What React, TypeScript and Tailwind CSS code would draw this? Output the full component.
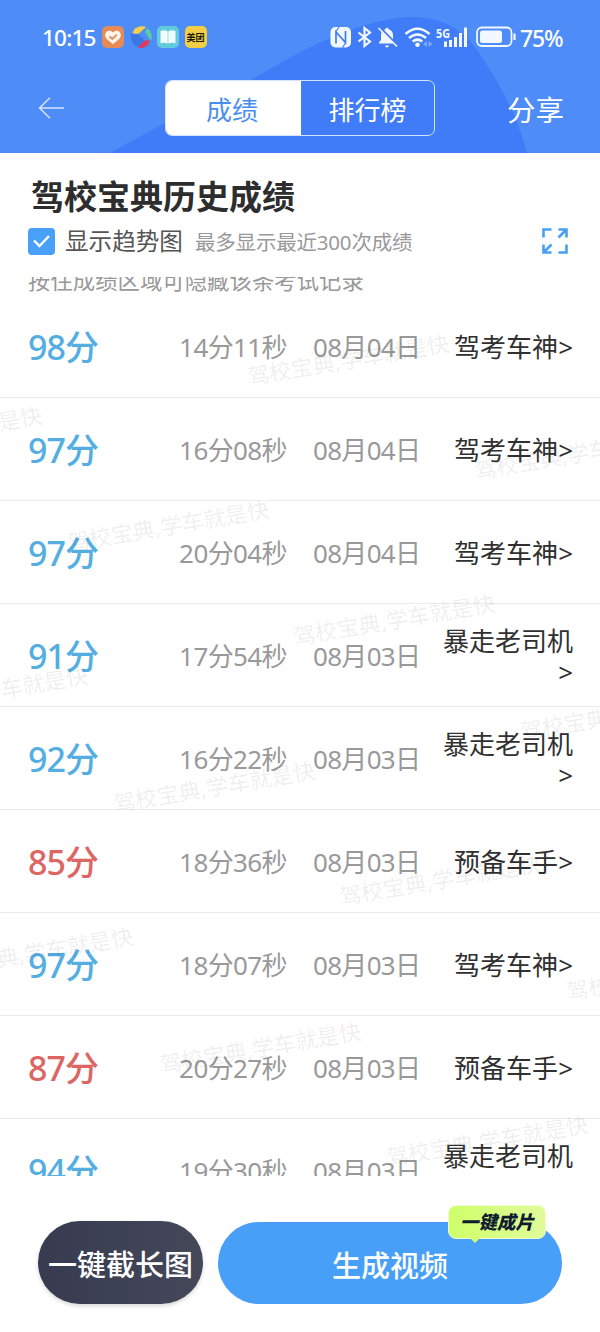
interface Result {
  score: number
  time: string
  date: string
  title: string
}

const results: Result[] = [
  { score: 98, time: "14分11秒", date: "08月04日", title: "驾考车神" },
  { score: 97, time: "16分08秒", date: "08月04日", title: "驾考车神" },
  { score: 97, time: "20分04秒", date: "08月04日", title: "驾考车神" },
  { score: 91, time: "17分54秒", date: "08月03日", title: "暴走老司机" },
  { score: 92, time: "16分22秒", date: "08月03日", title: "暴走老司机" },
  { score: 85, time: "18分36秒", date: "08月03日", title: "预备车手" },
  { score: 97, time: "18分07秒", date: "08月03日", title: "驾考车神" },
  { score: 87, time: "20分27秒", date: "08月03日", title: "预备车手" },
  { score: 94, time: "19分30秒", date: "08月03日", title: "暴走老司机" },
]

// left / top of every watermark inside the list
const watermarks = [
  [246, 70],
  [-161, 142],
  [473, 164],
  [66, 236],
  [292, 330],
  [-115, 402],
  [519, 425],
  [112, 497],
  [338, 590],
  [-70, 663],
  [565, 685],
  [158, 758],
  [385, 851],
]

function StatusBar() {
  return (
    <div className="flex h-[38px] items-center pl-[42px] pr-[37px] pt-[36px] text-white">
      <span className="w-[60px] pt-[2px] text-[22.5px] font-medium tracking-[-0.8px]">10:15</span>
      <div className="flex gap-[5.5px]">
        <svg width="22" height="22" viewBox="0 0 22 22">
          <rect width="22" height="22" rx="5" fill="#e58a58" />
          <path d="M11 18C4 13 3 11 3.2 8.4 3.6 4.6 8.3 3.4 11 6.4c2.7-3 7.400-1.800 7.800 2C19 11 18 13 11 18z" fill="#fff5e8" />
          <path d="M7.500 10.300l2.800 2.700 4.500-4.300" fill="none" stroke="#e58a58" strokeWidth="1.800" />
        </svg>
        <svg width="22" height="22" viewBox="0 0 22 22">
          <path d="M.8 7.500L7 7l10 10-3 4.500Q9 22.500 5 19.500 0 15 .8 7.500z" fill="#3b76e6" />
          <path d="M2.500 7Q4 1 11 .2q4-.2 5 .8L9 7.500q-4 1-6.500-.5z" fill="#f5cd4f" />
          <path d="M15 6l2-4Q22 5 21.800 11.500q0 2-1.300 3z" fill="#5ccba5" />
          <path d="M8 21.500L14 15q3-1.500 6 0-2 5.500-7.500 6.700-2.500.5-4.500-.2z" fill="#e23a57" />
        </svg>
        <svg width="22" height="22" viewBox="0 0 22 22">
          <rect width="22" height="22" rx="5" fill="#62cbdc" />
          <path d="M3.500 5Q7.500 3.500 10.700 5.200V17.500Q7 16 3.500 17.200zM18.500 5Q14.500 3.500 11.300 5.200V17.500Q15 16 18.500 17.200z" fill="#f0fdff" />
        </svg>
        <div className="flex size-[22px] items-center justify-center rounded-[5px] bg-[#f2ce45] text-[9px] font-bold leading-none text-[#1d1a10]">
          美团
        </div>
      </div>
      <div className="ml-auto flex items-center">
        <svg width="186" height="24" viewBox="0 0 186 24" fill="none" stroke="#f3f8ff">
          {/* nfc */}
          <rect x="0.500" y="2" width="20.500" height="20.500" rx="5" fill="#f3f8ff" stroke="none" />
          <path d="M6 18.500V7l9.500 10.500V6" stroke="#407cf8" strokeWidth="1.700" />
          <path d="M9 2l-3 4.500M12.500 22.500l3-4.500" stroke="#407cf8" strokeWidth="1.200" />
          {/* bluetooth */}
          <path d="M28.500 7.500l11.500 9-5.500 4.500V3L40 7.500l-11.500 9" strokeWidth="2.200" />
          {/* muted bell */}
          <path d="M49 18.500v-1.200l2-2.300v-5c0-3 2-5.200 4.500-5.700 0-2 3-2 3 0 2.500.5 4.500 2.700 4.500 5.700v5l2 2.300v1.200z" fill="#f3f8ff" stroke="none" />
          <path d="M55 20.500h4q-.5 2-2 2t-2-2z" fill="#f3f8ff" stroke="none" />
          <path d="M50 2.500l17 17.500" stroke="#407cf8" strokeWidth="2.500" />
          <path d="M48.500 3l18.500 18.500" strokeWidth="1.600" />
          {/* wifi */}
          <path d="M75.500 9q12-10.500 24 0M79 13q8.500-7 17 0M82.700 16.600q4.800-4 9.600 0" strokeWidth="2.600" />
          <circle cx="87.500" cy="19.800" r="2.300" fill="#f3f8ff" stroke="none" />
          <path d="M97 16v6l-4-3zM98.500 16v6l4-3z" fill="#7ea8fa" stroke="none" />
          {/* signal */}
          <path d="M115.500 22v-5.500M120.500 22v-7M125.500 22V12M130.500 22V8M135.500 22V2.500" strokeWidth="3" />
          <text x="106" y="12.500" fontSize="12.500" fontWeight="700" fill="#f3f8ff" stroke="none" textLength="14" lengthAdjust="spacingAndGlyphs">
            5G
          </text>
          {/* battery */}
          <rect x="147" y="2.500" width="34.500" height="18.500" rx="5" strokeWidth="1.800" />
          <rect x="150" y="5.500" width="22" height="12.500" rx="2.500" fill="#f3f8ff" stroke="none" />
          <path d="M184.500 8.500v6.500" strokeWidth="2.200" />
        </svg>
        <span className="ml-[4px] w-[43px] pt-[2px] text-[23px] font-medium tracking-[-1.200px]">75%</span>
      </div>
    </div>
  )
}

function Header() {
  return (
    <header className="relative h-[153px] shrink-0 overflow-hidden bg-[#4e8cf8]">
      <svg className="absolute inset-0" width="600" height="153" viewBox="0 0 600 153">
        <path d="M110 153L163 124 252 79 300 52Q372 16 415 17 455 18 477 50 515 105 527 153z" fill="#407cf8" />
      </svg>
      <div className="relative">
        <StatusBar />
        <div className="mt-[42px] flex h-[56px] items-center pl-[38px] pr-[36px] text-[26px] leading-none text-white">
          <svg width="27" height="22" viewBox="0 0 27 22" fill="none" stroke="#d5e4ff" strokeWidth="1.500">
            <path d="M12 .8L1.500 11 12 21.200M1.500 11H26" />
          </svg>
          <div className="ml-[100px] flex h-[56px] w-[270px] overflow-hidden rounded-[7px] border border-[#d5e3ff]">
            <div className="flex w-[135px] items-center justify-center bg-white pr-[3px] pt-[3px] text-[#4a8df0]">成绩</div>
            <div className="flex flex-1 items-center justify-center pt-[3px]">排行榜</div>
          </div>
          <span className="ml-auto pt-[4px] text-[28.500px]">分享</span>
        </div>
      </div>
    </header>
  )
}

function ResultRow({ score, time, date, title }: Result) {
  return (
    <div className="flex h-[103px] shrink-0 items-center border-b border-[#ebebeb] pl-[28px] pr-[27px] pt-[3px] text-[26px] leading-[31px] text-[#999]">
      <span
        className={
          score >= 90
            ? "w-[120px] text-[34px] font-medium tracking-[-0.900px] text-[#54aee2]"
            : "w-[120px] text-[34px] font-medium tracking-[-0.900px] text-[#dc6664]"
        }
      >
        {score}分
      </span>
      <span className="w-[139px] whitespace-nowrap text-right tracking-[-0.600px]">{time}</span>
      <span className="ml-[26px] w-[108px] whitespace-nowrap tracking-[-0.700px]">{date}</span>
      <span className="ml-auto w-[132px] break-all text-right text-[#303030]">{title}&gt;</span>
    </div>
  )
}

export default function App() {
  return (
    <div className="flex h-[1332px] w-[600px] flex-col overflow-hidden bg-white font-['Noto_Sans','Noto_Sans_CJK_SC',sans-serif]">
      <Header />

      <section className="h-[124px] shrink-0 pl-[28px] pr-[32px] pt-[23px]">
        <h1 className="pl-[3px] text-[33px] font-bold leading-[42px] text-[#2d2d2d]">驾校宝典历史成绩</h1>
        <div className="mt-[8px] flex h-[30px] items-center">
          <span className="flex size-[27px] items-center justify-center rounded-[4px] bg-[#48a0f8]">
            <svg width="19" height="16" viewBox="0 0 19 16" fill="none" stroke="#fff" strokeWidth="2.400">
              <path d="M2 7.500L7.500 13 17 3" />
            </svg>
          </span>
          <span className="ml-[10px] w-[130px] pt-[2px] text-[23.600px] leading-none text-[#555]">显示趋势图</span>
          <span className="whitespace-nowrap pt-[2px] text-[20.500px] leading-none tracking-[-0.200px] text-[#999]">最多显示最近300次成绩</span>
          <svg className="ml-auto" width="26" height="26" viewBox="0 0 26 26" fill="none" stroke="#489ff3" strokeWidth="2.600">
            <path d="M1.500 9.500V1.500H9.500M16.500 1.500h8v8M24.500 1.500l-8 8M24.500 16.500v8h-8M9.500 24.500h-8v-8M1.500 24.500l8-8" />
          </svg>
        </div>
      </section>

      <main className="relative flex h-[899px] shrink-0 flex-col overflow-hidden">
        <div className="h-[18px] shrink-0 pl-[28px]">
          <p className="-mt-[8px] whitespace-nowrap text-[22.400px] leading-[24px] text-[#999]">按住成绩区域可隐藏该条考试记录</p>
        </div>
        {results.map((result, i) => (
          <ResultRow key={i} {...result} />
        ))}
        {watermarks.map(([left, top], i) => (
          <span
            key={i}
            className="pointer-events-none absolute w-[206px] -rotate-[9.500deg] whitespace-nowrap text-[22px] leading-[24px] text-black/8"
            style={{ left, top }}
          >
            驾校宝典,学车就是快
          </span>
        ))}
      </main>

      <footer className="flex flex-1 gap-[15px] pl-[38px] pr-[38px] pt-[46px] text-[29px] leading-none text-white">
        <button className="-mt-px h-[83px] w-[165px] whitespace-nowrap rounded-full bg-linear-to-r from-[#383b50] to-[#444859] pt-[3px] font-medium shadow-[0_2px_4px_rgba(0,0,0,0.16)]">
          一键截长图
        </button>
        <button className="relative h-[82px] flex-1 rounded-full bg-[#489ff8] pt-[4px] font-medium">
          生成视频
          <span className="absolute right-[16px] top-[-17px] flex h-[34px] w-[98px] items-center justify-center rounded-[8px] border border-[#efffd0] bg-linear-to-r from-[#cfff69] to-[#e0fc99] text-[18.500px] font-black italic text-[#101c30]">
            一键成片
            <svg className="absolute left-[20px] top-[31px]" width="12" height="7" viewBox="0 0 12 7">
              <path d="M0 0h12L6 6z" fill="#d3ff70" />
            </svg>
          </span>
        </button>
      </footer>
    </div>
  )
}
